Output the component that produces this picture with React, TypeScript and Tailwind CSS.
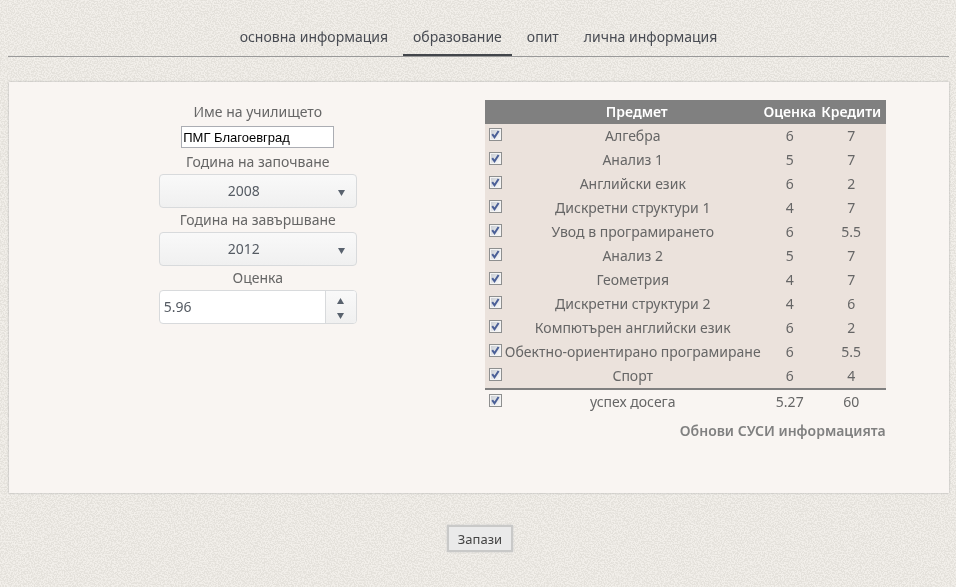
import { useState } from "react";

const tabs = ["основна информация", "образование", "опит", "лична информация"];

const subjects: [string, string, string][] = [
  ["Алгебра", "6", "7"],
  ["Анализ 1", "5", "7"],
  ["Английски език", "6", "2"],
  ["Дискретни структури 1", "4", "7"],
  ["Увод в програмирането", "6", "5.5"],
  ["Анализ 2", "5", "7"],
  ["Геометрия", "4", "7"],
  ["Дискретни структури 2", "4", "6"],
  ["Компютърен английски език", "6", "2"],
  ["Обектно-ориентирано програмиране", "6", "5.5"],
  ["Спорт", "6", "4"],
];

function PaperTexture() {
  return (
    <svg aria-hidden="true" className="fixed inset-0 -z-10 h-full w-full">
      <filter id="grain" x="0" y="0" width="100%" height="100%" colorInterpolationFilters="sRGB">
        <feTurbulence type="fractalNoise" baseFrequency="0.7" numOctaves="2" seed="7" />
        <feColorMatrix values="0 0 0 0 0.949  0 0 0 0 0.937  0 0 0 0 0.918  5 0 0 0 -2" />
      </filter>
      <rect width="100%" height="100%" fill="#e4e1db" />
      <rect width="100%" height="100%" filter="url(#grain)" />
    </svg>
  );
}

function Check({ label }: { label: string }) {
  return (
    <span className="relative mx-1 block h-[13px] w-[13px]">
      <input
        type="checkbox"
        defaultChecked
        aria-label={label}
        className="peer block h-[13px] w-[13px] appearance-none border border-[#8e8f8f] bg-linear-to-br from-[#c6cad0] to-white outline-1 -outline-offset-2 outline-[#f4f4f4]"
      />
      <svg viewBox="0 0 13 13" className="pointer-events-none invisible absolute inset-0 peer-checked:visible">
        <path d="M3.2 6.2 L5.5 9.2 L9.6 3" fill="none" stroke="#4a5f97" strokeWidth="2" />
      </svg>
    </span>
  );
}

function Triangle({ up = false }: { up?: boolean }) {
  return (
    <svg viewBox="0 0 7 6" className="h-[6px] w-[7px]">
      <path d={up ? "M0 6 L3.5 0 L7 6 Z" : "M0 0 H7 L3.5 6 Z"} fill="#59626e" />
    </svg>
  );
}

function YearSelect({ id, label, initial }: { id: string; label: string; initial: string }) {
  return (
    <>
      <label htmlFor={id} className="leading-6">{label}</label>
      <div className="relative w-[198px]">
        <select
          id={id}
          defaultValue={initial}
          className="block h-[34px] w-full appearance-none rounded border border-[#d8dadc] bg-linear-to-b from-[#f9f9f9] to-[#f0f0f0] pr-7 text-center text-[#555b63] [text-align-last:center]"
        >
          {["2006", "2007", "2008", "2009", "2010", "2011", "2012", "2013"].map((y) => (
            <option key={y}>{y}</option>
          ))}
        </select>
        <span className="pointer-events-none absolute inset-y-0 right-3 flex items-center pt-[3px]">
          <Triangle />
        </span>
      </div>
    </>
  );
}

export default function App() {
  const [grade, setGrade] = useState(5.96);
  const step = (d: number) => setGrade((g) => Number((g + d).toFixed(2)));
  return (
    <div className="relative isolate min-h-screen pr-[7px] pb-9 pl-2 font-['Noto_Sans',sans-serif] text-sm text-[#666]">
      <PaperTexture />
      <nav className="flex justify-center gap-[5px] border-b border-[#999] pt-5 text-[#484b52]">
        {tabs.map((t, i) => (
          <a
            key={t}
            href="#"
            className={
              i === 1
                ? "border-b-2 border-[#42454a] px-[10px] pt-[5px] pb-[5px] leading-6"
                : "border-b-2 border-transparent px-[10px] pt-[5px] pb-[5px] leading-6"
            }
          >
            {t}
          </a>
        ))}
      </nav>

      <main className="mt-[25px] ml-px grid grid-cols-2 bg-[#f9f5f2] pt-[18px] pr-[50px] pb-[50px] pl-[35px] shadow-[0_0_2px_#aaa]">
        <form className="flex flex-col items-center">
          <label htmlFor="school" className="leading-6">Име на училището</label>
          <input
            id="school"
            defaultValue="ПМГ Благоевград"
            className="my-[2px] h-[22px] w-[153px] border border-[#abadb3] bg-white px-px font-['Liberation_Sans',sans-serif] text-[13px] text-black"
          />
          <YearSelect id="start" label="Година на започване" initial="2008" />
          <YearSelect id="end" label="Година на завършване" initial="2012" />
          <label htmlFor="grade" className="leading-6">Оценка</label>
          <div className="flex h-[34px] w-[198px] overflow-hidden rounded border border-[#d8dadc] bg-white">
            <input
              id="grade"
              type="number"
              step="0.01"
              value={grade}
              onChange={(e) => setGrade(Number(e.target.value))}
              className="min-w-0 flex-1 px-1 text-[#555b63] [appearance:textfield] [&::-webkit-inner-spin-button]:appearance-none"
            />
            <div className="flex w-[31px] flex-col border-l border-[#d8dadc] bg-linear-to-b from-[#f9f9f9] to-[#f0f0f0]">
              <button type="button" aria-label="Увеличи" onClick={() => step(0.01)} className="flex flex-1 items-center justify-center pt-[2px]">
                <Triangle up />
              </button>
              <button type="button" aria-label="Намали" onClick={() => step(-0.01)} className="flex flex-1 items-center justify-center">
                <Triangle />
              </button>
            </div>
          </div>
        </form>

        <section className="mx-auto w-[401px]">
          <table className="w-full table-fixed border-separate border-spacing-0 text-center whitespace-nowrap">
            <colgroup>
              <col className="w-[18px]" />
              <col />
              <col className="w-[54px]" />
              <col className="w-[69px]" />
            </colgroup>
            <thead className="bg-[#808080] text-white">
              <tr className="h-6">
                <th className="p-0" />
                <th className="p-0 pl-2 font-semibold">Предмет</th>
                <th className="p-0 font-semibold">Оценка</th>
                <th className="p-0 font-semibold">Кредити</th>
              </tr>
            </thead>
            <tbody className="bg-[#ebe2dc]">
              {subjects.map(([name, mark, credits]) => (
                <tr key={name} className="h-6">
                  <td className="p-0 pb-[3px]"><Check label={name} /></td>
                  <td className="p-0">{name}</td>
                  <td className="p-0">{mark}</td>
                  <td className="p-0">{credits}</td>
                </tr>
              ))}
            </tbody>
            <tfoot>
              <tr className="h-[26px]">
                <td className="border-t-2 border-[#808080] p-0 pb-[3px]"><Check label="успех досега" /></td>
                <td className="border-t-2 border-[#808080] p-0">успех досега</td>
                <td className="border-t-2 border-[#808080] p-0">5.27</td>
                <td className="border-t-2 border-[#808080] p-0">60</td>
              </tr>
            </tfoot>
          </table>
          <a href="#" className="mt-[5px] block text-right leading-6 font-semibold text-[#808080]">
            Обнови СУСИ информацията
          </a>
        </section>
      </main>

      <div className="mt-8 flex justify-center pl-[3px]">
        <button
          type="button"
          className="h-[27px] border-2 border-[#c9c9c8] bg-[#eaeaea] px-[9px] text-[13px] leading-5 text-[#444] shadow-[0_0_2px_#ccc]"
        >
          Запази
        </button>
      </div>
    </div>
  );
}
